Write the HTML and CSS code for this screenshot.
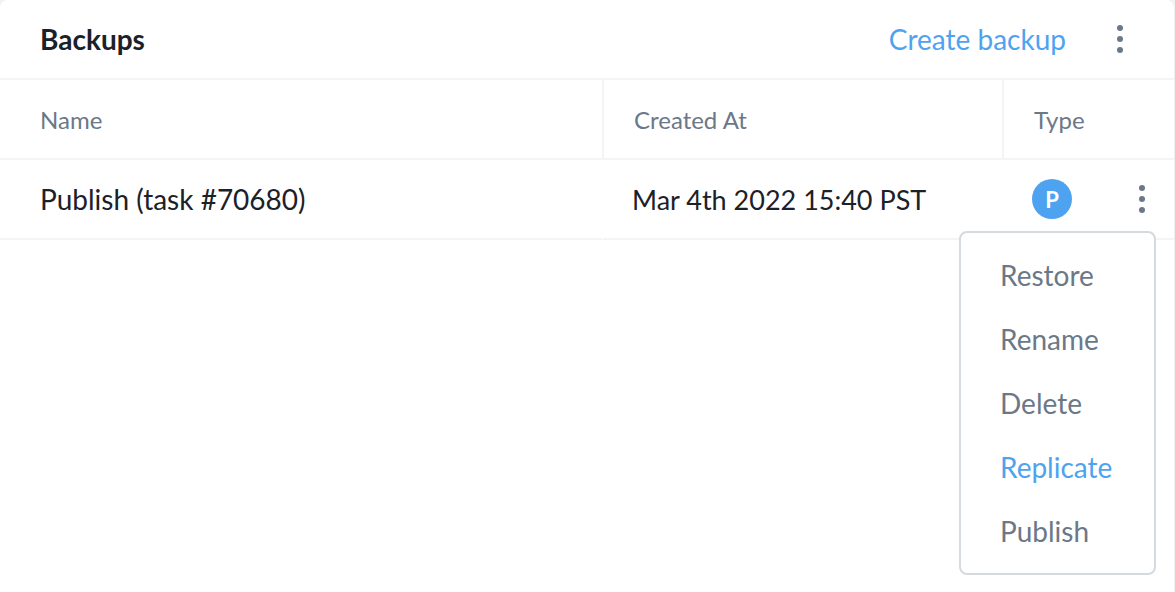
FILE: index.html
```html
<!DOCTYPE html>
<html lang="en">
<head>
    <meta charset="UTF-8">
    <meta name="viewport" content="width=device-width, initial-scale=1.0">
    <title>Backups</title>
    <link rel="stylesheet" href="styles.css">
</head>
<body>
    <main class="card">
        <header class="card-header">
            <h1 class="card-title">Backups</h1>
            <div class="card-actions">
                <a href="#" class="create-link">Create backup</a>
                <button class="dots-button" type="button" aria-label="Backup options">
                    <svg width="8" height="28" viewBox="0 0 8 28" aria-hidden="true">
                        <circle cx="4" cy="3" r="3"/>
                        <circle cx="4" cy="14" r="3"/>
                        <circle cx="4" cy="25" r="3"/>
                    </svg>
                </button>
            </div>
        </header>

        <table class="backup-table">
            <thead>
                <tr>
                    <th class="col-name" scope="col">Name</th>
                    <th class="col-created" scope="col">Created At</th>
                    <th class="col-type" scope="col">Type</th>
                </tr>
            </thead>
            <tbody>
                <tr>
                    <td>Publish (task #70680)</td>
                    <td class="created-at">Mar 4th 2022 15:40 PST</td>
                    <td>
                        <div class="type-cell">
                            <span class="type-badge">P</span>
                            <div class="row-menu">
                                <button class="dots-button" type="button" aria-label="Row options" aria-expanded="true" aria-controls="row-options">
                                    <svg width="8" height="28" viewBox="0 0 8 28" aria-hidden="true">
                                        <circle cx="4" cy="3" r="3"/>
                                        <circle cx="4" cy="14" r="3"/>
                                        <circle cx="4" cy="25" r="3"/>
                                    </svg>
                                </button>
                                <div class="menu" id="row-options">
                                    <button class="menu-item" type="button">Restore</button>
                                    <button class="menu-item" type="button">Rename</button>
                                    <button class="menu-item" type="button">Delete</button>
                                    <button class="menu-item active" type="button">Replicate</button>
                                    <button class="menu-item" type="button">Publish</button>
                                </div>
                            </div>
                        </div>
                    </td>
                </tr>
            </tbody>
        </table>
    </main>
</body>
</html>
```

FILE: styles.css
```css
* {
    box-sizing: border-box;
}
body {
    margin: 0;
    padding-right: 1px;
    background: #f0f2f4;
    font-family: Lato, "Liberation Sans", sans-serif;
    font-size: 28px;
    color: #1b2128;
}
button {
    font: inherit;
    background: none;
    border: none;
    padding: 0;
    cursor: pointer;
}
.card {
    min-height: 100vh;
    background: #fff;
    border-radius: 8px 8px 0 0;
}
.card-header {
    display: flex;
    justify-content: space-between;
    align-items: center;
    height: 80px;
    padding: 0 40px;
    border-bottom: 2px solid #f3f4f5;
}
.card-title {
    margin: 0;
    font-size: 28px;
    font-weight: bold;
}
.card-actions {
    display: flex;
    align-items: center;
    gap: 40px;
}
.create-link {
    color: #4ea3f1;
    text-decoration: none;
}
.create-link:hover {
    text-decoration: underline;
}
.dots-button {
    display: flex;
    justify-content: center;
    width: 28px;
    color: #6b7888;
}
.dots-button svg {
    fill: currentColor;
}
.backup-table {
    width: 100%;
    table-layout: fixed;
    border-collapse: separate;
    border-spacing: 0;
}
.backup-table th,
.backup-table td {
    height: 80px;
    padding: 0 0 0 28px;
    border-bottom: 2px solid #f3f4f5;
    border-left: 2px solid transparent;
    text-align: left;
    white-space: nowrap;
}
.backup-table th {
    padding-left: 30px;
    border-left-color: #f3f4f5;
    font-size: 24px;
    font-weight: normal;
    color: #6b7888;
}
.backup-table th:first-child,
.backup-table td:first-child {
    padding-left: 40px;
    border-left: none;
}
.col-created {
    width: 400px;
}
.col-type {
    width: 172px;
}
.created-at {
    font-size: 27px;
}
.type-cell {
    display: flex;
    justify-content: space-between;
    align-items: center;
    padding-right: 18px;
}
.type-badge {
    display: flex;
    align-items: center;
    justify-content: center;
    width: 40px;
    height: 40px;
    border-radius: 50%;
    background: #4ea3f1;
    color: #fff;
    font-size: 22px;
    font-weight: bold;
}
.row-menu {
    position: relative;
}
.menu {
    position: absolute;
    top: 46px;
    right: 0;
    width: 197px;
    padding: 10px 0;
    background: #fff;
    border: 2px solid #d5dadf;
    border-radius: 8px;
}
.menu-item {
    display: block;
    width: 100%;
    height: 64px;
    padding-left: 39px;
    text-align: left;
    color: #6b7888;
}
.menu-item:hover,
.menu-item.active {
    color: #4ea3f1;
}
```
